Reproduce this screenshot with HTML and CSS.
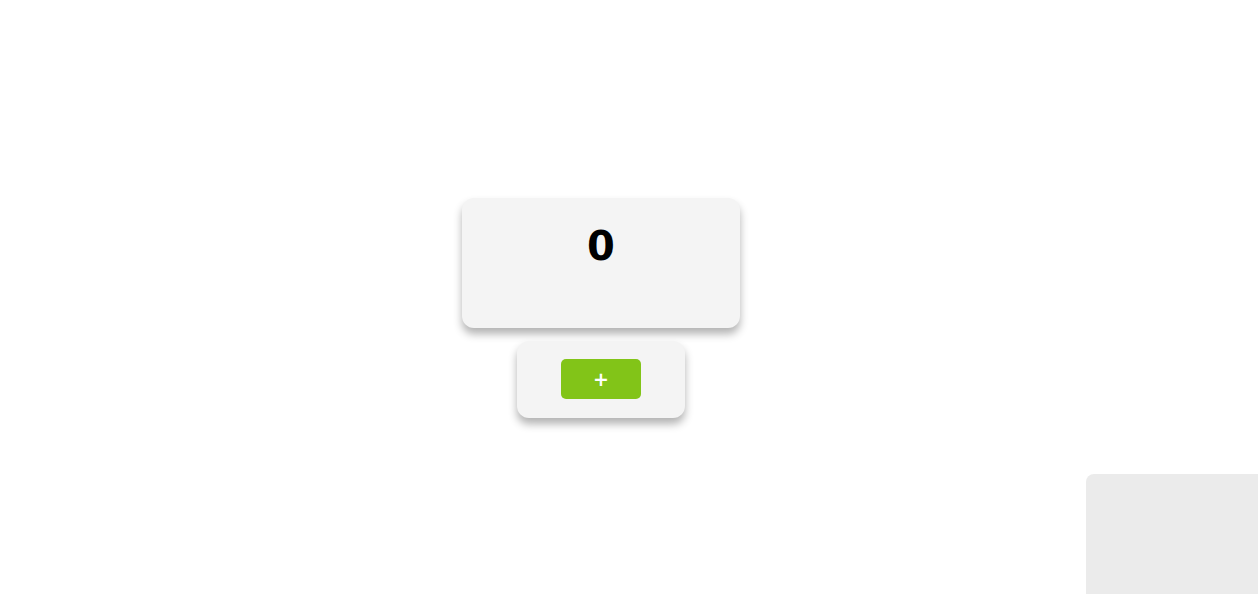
FILE: index.html
```html
<!DOCTYPE html>
<html>
<head>
<meta charset="utf-8">
<link rel="stylesheet" href="styles.css">
</head>
<body>
<main class="app">
  <section class="display-card">
    <div class="count">0</div>
  </section>
  <section class="controls-card">
    <button class="add-btn">+</button>
  </section>
</main>
<aside class="corner-panel"></aside>
</body>
</html>
```

FILE: styles.css
```css
html, body {
  margin: 0;
  padding: 0;
  background: #ffffff;
  font-family: "DejaVu Sans", "Liberation Sans", sans-serif;
}
body {
  min-height: 100vh;
}
.app {
  width: 1202px;
  padding-top: 198px;
  padding-bottom: 40px;
  display: flex;
  flex-direction: column;
  align-items: center;
  gap: 13px;
}
.display-card {
  width: 278px;
  height: 130px;
  box-sizing: border-box;
  background: #f4f4f4;
  border-radius: 12px;
  box-shadow: 0 6px 8px rgba(0, 0, 0, 0.3);
  padding-top: 25px;
  display: flex;
  justify-content: center;
}
.count {
  font-size: 40px;
  font-weight: bold;
  color: #000;
  line-height: 46px;
}
.controls-card {
  width: 168px;
  height: 77px;
  box-sizing: border-box;
  background: #f4f4f4;
  border-radius: 12px;
  box-shadow: 0 6px 8px rgba(0, 0, 0, 0.3);
  padding-top: 18px;
  display: flex;
  justify-content: center;
  align-items: flex-start;
}
.add-btn {
  width: 80px;
  height: 40px;
  border: none;
  border-radius: 5px;
  background: #82c418;
  color: #ffffff;
  font-family: "DejaVu Sans", sans-serif;
  font-size: 19px;
  font-weight: bold;
  line-height: 1;
  padding: 0;
}
.corner-panel {
  position: fixed;
  left: 1086px;
  top: 474px;
  right: 0;
  bottom: 0;
  background: #ebebeb;
  border-top-left-radius: 8px;
}
```
